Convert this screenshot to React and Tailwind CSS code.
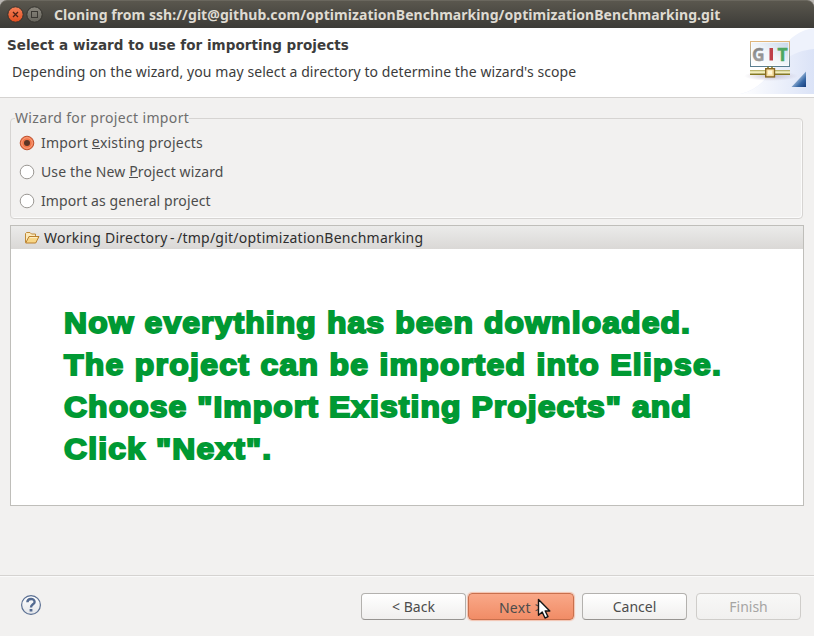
import React from "react";

function TitleBar() {
  return (
    <div className="h-7 bg-[#b9b6b2]">
      <div className="flex h-7 items-center rounded-t-[7px] border-t border-[#6a675e] bg-gradient-to-b from-[#5a574e] to-[#3c3b37] pl-[7px]">
        <svg width="36" height="17" viewBox="0 0 36 17" className="shrink-0">
          <defs>
            <linearGradient id="closeFill" x1="0" y1="0" x2="0" y2="1">
              <stop offset="0" stopColor="#f58159" />
              <stop offset="1" stopColor="#e24e1f" />
            </linearGradient>
            <linearGradient id="maxFill" x1="0" y1="0" x2="0" y2="1">
              <stop offset="0" stopColor="#8a877e" />
              <stop offset="1" stopColor="#66645c" />
            </linearGradient>
          </defs>
          <circle cx="8.5" cy="8.5" r="7.7" fill="url(#closeFill)" stroke="#34322d" strokeWidth="1" />
          <path d="M6 6l5 5M11 6l-5 5" stroke="#4b2115" strokeWidth="1.3" />
          <circle cx="27.5" cy="8.5" r="7.7" fill="url(#maxFill)" stroke="#34322d" strokeWidth="1" />
          <rect x="24.5" y="5.5" width="6" height="6" fill="none" stroke="#3a3833" />
        </svg>
        <span className="ml-[11px] whitespace-nowrap text-[14px] leading-5 font-bold tracking-[0.055px] text-[#dfdbd2]">
          Cloning from ssh://git@github.com/optimizationBenchmarking/optimizationBenchmarking.git
        </span>
      </div>
    </div>
  );
}

function GitBanner() {
  return (
    <svg width="74" height="66" viewBox="0 0 74 66" className="shrink-0">
      <defs>
        <linearGradient id="sweep" x1="0" y1="0.6" x2="1" y2="0.6">
          <stop offset="0" stopColor="#ffffff" />
          <stop offset="1" stopColor="#dbe3f7" />
        </linearGradient>
        <linearGradient id="screen" x1="0" y1="1" x2="1" y2="0">
          <stop offset="0" stopColor="#ffffff" />
          <stop offset="0.5" stopColor="#f1f5f9" />
          <stop offset="1" stopColor="#c5d5e9" />
        </linearGradient>
        <linearGradient id="frame" x1="0" y1="0" x2="0" y2="1">
          <stop offset="0" stopColor="#e0b67c" />
          <stop offset="0.6" stopColor="#98a29e" />
          <stop offset="1" stopColor="#587d91" />
        </linearGradient>
        <linearGradient id="corner" x1="0" y1="0" x2="1" y2="1">
          <stop offset="0.35" stopColor="#b7cde6" />
          <stop offset="0.7" stopColor="#3869a6" />
          <stop offset="1" stopColor="#173d7c" />
        </linearGradient>
        <linearGradient id="letterG" x1="0" y1="0" x2="0" y2="1">
          <stop offset="0" stopColor="#777" />
          <stop offset="1" stopColor="#aaa" />
        </linearGradient>
        <radialGradient id="shade">
          <stop offset="0" stopColor="#a99cb4" stopOpacity="0.6" />
          <stop offset="1" stopColor="#a99cb4" stopOpacity="0" />
        </radialGradient>
      </defs>
      <path d="M42 22C50 9 60 2 74 0V66H0C20 62 34 44 42 22Z" fill="#eef2fc" />
      <path d="M0 66C22 62 32 42 44 32C54 25 63 22 74 21V66Z" fill="url(#sweep)" />
      <ellipse cx="31" cy="48" rx="27" ry="5" fill="url(#shade)" />
      <rect x="10.5" y="13.5" width="39" height="25" fill="url(#screen)" stroke="url(#frame)" />
      <rect x="11.5" y="14.5" width="37" height="23" fill="none" stroke="#ffffff" strokeOpacity="0.6" />
      <path d="M10 38.5H50" stroke="#587d91" />
      <g fontFamily="Noto Sans, sans-serif" fontWeight="700" fontSize="17.5">
        <text x="12" y="32.5" fill="url(#letterG)" stroke="#8a8a8a" strokeWidth="0.3">
          G
        </text>
        <rect x="29.5" y="20" width="3.5" height="12.5" fill="#bf4049" />
        <text x="37.6" y="32.5" fill="#4ea762" stroke="#4ea762" strokeWidth="0.5">
          T
        </text>
      </g>
      <path d="M10 42.8H50" stroke="#a99f3c" strokeWidth="1.2" />
      <path d="M10 44.5H50" stroke="#f4efb9" strokeWidth="2" />
      <path d="M10 46.3H50" stroke="#857820" strokeWidth="1.4" />
      <path d="M28 38.5V41M32 38.5V41" stroke="#807b32" strokeWidth="1.6" />
      <rect x="25.7" y="40.7" width="8.8" height="8.2" fill="#f6dda0" stroke="#886823" strokeWidth="1.4" />
      <rect x="28" y="42.5" width="4" height="4" fill="#fff5d6" />
      <path d="M51.5 59L66 43.5V59Z" fill="url(#corner)" />
    </svg>
  );
}

function Radio({ checked, children, className }) {
  return (
    <label className={"flex h-[29px] items-center whitespace-nowrap text-[14px] text-[#4c4c4c] " + className}>
      <svg width="16" height="16" viewBox="0 0 16 16" className="mr-[6px] shrink-0">
        <circle
          cx="8"
          cy="8"
          r="6.8"
          fill={checked ? "#f0764b" : "#ffffff"}
          stroke={checked ? "#bd5230" : "#9b9894"}
          strokeWidth="1"
        />
        {checked && <circle cx="8" cy="8" r="5.3" fill="none" stroke="#f8a07c" strokeWidth="1" />}
        {checked && <circle cx="8" cy="8" r="3" fill="#5b3526" />}
      </svg>
      <span>{children}</span>
    </label>
  );
}

function Mnemonic({ children }) {
  return <span className="inline-block h-[17px] border-b border-[#4c4c4c] align-top leading-5">{children}</span>;
}

function FolderIcon() {
  return (
    <svg width="16" height="14" viewBox="0 0 16 14" className="shrink-0">
      <path d="M1.5 11.5V2.5L2.5 1.5H6L7.5 3H11.5V5.5" fill="#fbe9bb" stroke="#c08a38" strokeLinejoin="round" />
      <path d="M1.7 12L5 5.5H15L11.7 12Z" fill="#f8d686" stroke="#b97f2e" strokeLinejoin="round" />
      <path d="M5.8 6.6H13.2" stroke="#fdf0c8" />
    </svg>
  );
}

const buttonBase =
  "flex h-[27px] items-center justify-center rounded-[4px] border text-[14px] leading-5 whitespace-nowrap";

export default function App() {
  return (
    <div className="flex h-[636px] w-[814px] flex-col overflow-hidden bg-[#f2f1f0] font-['Noto_Sans',sans-serif] text-[#4c4c4c]">
      <TitleBar />

      <header className="flex h-[70px] shrink-0 justify-between border-b border-[#d5d3d1] bg-white">
        <div className="whitespace-nowrap">
          <h1 className="mt-[7px] ml-[7px] font-['DejaVu_Sans',sans-serif] text-[13.5px] leading-5 font-bold tracking-[0.03px] text-[#3c3c3c]">
            Select a wizard to use for importing projects
          </h1>
          <p className="mt-[7px] ml-[12px] text-[14px] leading-5 tracking-[0.085px] text-[#3c3c3c]">
            Depending on the wizard, you may select a directory to determine the wizard's scope
          </p>
        </div>
        <GitBanner />
      </header>

      <fieldset className="mr-[11px] ml-[10px] mt-[10px] h-[111px] rounded-[4px] border border-[#d6d4d2] pl-[8px] shadow-[inset_-1px_-1px_0_#fbfbfb]">
        <legend className="-ml-[4px] h-[20px] text-[14px] leading-5 tracking-[0.34px] text-[#6e6e6e]">
          Wizard for project import
        </legend>
        <div>
          <Radio checked className="tracking-[0.2px]">
            Import <Mnemonic>e</Mnemonic>xisting projects
          </Radio>
          <Radio className="tracking-[0.13px]">
            Use the New <Mnemonic>P</Mnemonic>roject wizard
          </Radio>
          <Radio className="tracking-[0.1px]">Import as general project</Radio>
        </div>
      </fieldset>

      <main className="mx-[10px] mt-[6px] flex h-[281px] shrink-0 flex-col border border-[#bfbeba] bg-white">
        <div className="flex h-[23px] shrink-0 items-center gap-[4px] bg-gradient-to-b from-[#ebebea] to-[#dad8d6] pl-[13px] text-[14px] text-[#2e2e2e]">
          <FolderIcon />
          <div className="flex whitespace-nowrap leading-5">
            <span className="w-[126px] tracking-[0.25px]">Working Directory</span>
            <span className="w-[7px]">-</span>
            <span className="tracking-[0.24px]">/tmp/git/optimizationBenchmarking</span>
          </div>
        </div>
        <div className="mt-[53px] ml-[52.5px] w-[660px] origin-left scale-x-108 font-['Liberation_Sans',Arial,sans-serif] text-[29.5px] leading-[42px] font-bold whitespace-nowrap text-[#009933] [-webkit-text-stroke:1.9px_#009933]">
          <p className="tracking-[1.04px]">Now everything has been downloaded.</p>
          <p className="tracking-[1.22px]">The project can be imported into Elipse.</p>
          <p className="tracking-[1px]">Choose "Import Existing Projects" and</p>
          <p className="tracking-[1.08px]">Click "Next".</p>
        </div>
      </main>

      <footer className="mt-[69px] flex h-[61px] shrink-0 justify-between border-t border-[#d5d3d1] pr-[13px] pl-[20px] shadow-[inset_0_1px_0_#fafafa]">
        <svg width="22" height="22" viewBox="0 0 22 22" className="mt-[18px]">
          <defs>
            <linearGradient id="help" x1="0" y1="0" x2="0" y2="1">
              <stop offset="0" stopColor="#ffffff" />
              <stop offset="1" stopColor="#e3e5e9" />
            </linearGradient>
          </defs>
          <circle cx="11" cy="11" r="9.4" fill="url(#help)" stroke="#5a6f92" strokeWidth="1.2" />
          <path
            d="M7.4 8.3C7.4 3.9 14.6 3.9 14.6 7.9C14.6 10.4 11 10.3 11 13.4"
            fill="none"
            stroke="#536a91"
            strokeWidth="2.4"
          />
          <rect x="9.6" y="15" width="2.8" height="2.5" fill="#536a91" />
        </svg>
        <div className="mt-[17px] flex">
          <button className={buttonBase + " w-[105px] border-[#b3b1ae] border-b-[#969491] bg-gradient-to-b from-white to-[#f0efee]"}>
            &lt; Back
          </button>
          <div className="relative ml-[2px]">
            <button className={buttonBase + " w-[106px] border-[#c9704d] bg-gradient-to-b from-[#f9a888] to-[#f18c66] pt-[2px] shadow-[0_0_1px_1px_#f3c3b0]"}>
              <span className="tracking-[0.3px]">Next &gt;</span>
            </button>
            <svg width="16" height="22" viewBox="0 0 16 22" className="absolute top-[5px] left-[69px]">
              <path
                d="M1.5 1.5V17.3L5.2 14L8 20L11 18.6L8.2 13H12.8Z"
                fill="#ffffff"
                stroke="#151515"
                strokeWidth="1.4"
                strokeLinejoin="round"
              />
            </svg>
          </div>
          <button className={buttonBase + " ml-[8px] w-[105px] border-[#b3b1ae] border-b-[#969491] bg-gradient-to-b from-white to-[#f0efee]"}>
            Cancel
          </button>
          <button className={buttonBase + " ml-[9px] w-[105px] border-[#cfcdca] bg-gradient-to-b from-[#f8f8f7] to-[#f1f0ef] text-[#a6a5a3]"}>
            Finish
          </button>
        </div>
      </footer>
    </div>
  );
}
